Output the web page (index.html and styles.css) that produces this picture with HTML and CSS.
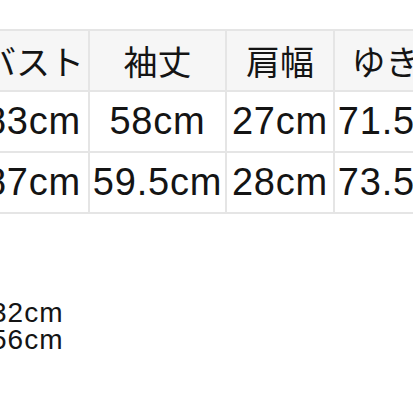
FILE: index.html
```html
<!DOCTYPE html>
<html lang="ja">
<head>
    <meta charset="UTF-8">
    <meta name="viewport" content="width=device-width, initial-scale=1.0">
    <title>サイズ表</title>
    <link rel="stylesheet" href="styles.css">
</head>
<body>
    <div class="page">
        <table class="size-table">
            <colgroup>
                <col class="col-bust">
                <col class="col-sleeve">
                <col class="col-shoulder">
                <col class="col-yuki">
            </colgroup>
            <thead>
                <tr>
                    <th>バスト</th>
                    <th>袖丈</th>
                    <th>肩幅</th>
                    <th>ゆき丈</th>
                </tr>
            </thead>
            <tbody>
                <tr>
                    <td>83cm</td>
                    <td>58cm</td>
                    <td>27cm</td>
                    <td>71.5cm</td>
                </tr>
                <tr>
                    <td>87cm</td>
                    <td>59.5cm</td>
                    <td>28cm</td>
                    <td>73.5cm</td>
                </tr>
            </tbody>
        </table>

        <div class="notes">
            <p>32cm</p>
            <p>56cm</p>
        </div>
    </div>
</body>
</html>
```

FILE: styles.css
```css
html, body {
    margin: 0;
    padding: 0;
    background-color: #fff;
    overflow: hidden;
}
body {
    font-family: "Liberation Sans", "Noto Sans CJK JP", sans-serif;
    color: #141414;
}
.page {
    padding-top: 29px;
    margin-left: -24px;
    width: 560px;
}
.size-table {
    border-collapse: collapse;
    table-layout: fixed;
    width: 494px;
}
.col-bust {
    width: 112px;
}
.col-sleeve {
    width: 137px;
}
.col-shoulder {
    width: 108px;
}
.col-yuki {
    width: 137px;
}
.size-table th,
.size-table td {
    border: 2px solid #e5e5e5;
    padding: 0;
    height: 59px;
    text-align: center;
    white-space: nowrap;
    overflow: hidden;
}
.size-table th {
    background-color: #f6f6f6;
    font-family: "Noto Sans CJK JP", sans-serif;
    font-weight: normal;
    font-size: 34px;
}
.size-table td {
    font-size: 38px;
    letter-spacing: 0.8px;
}
.notes {
    margin-top: 85px;
    margin-left: 15px;
    font-size: 28px;
    line-height: 27px;
    letter-spacing: 1px;
}
.notes p {
    margin: 0;
}
```
